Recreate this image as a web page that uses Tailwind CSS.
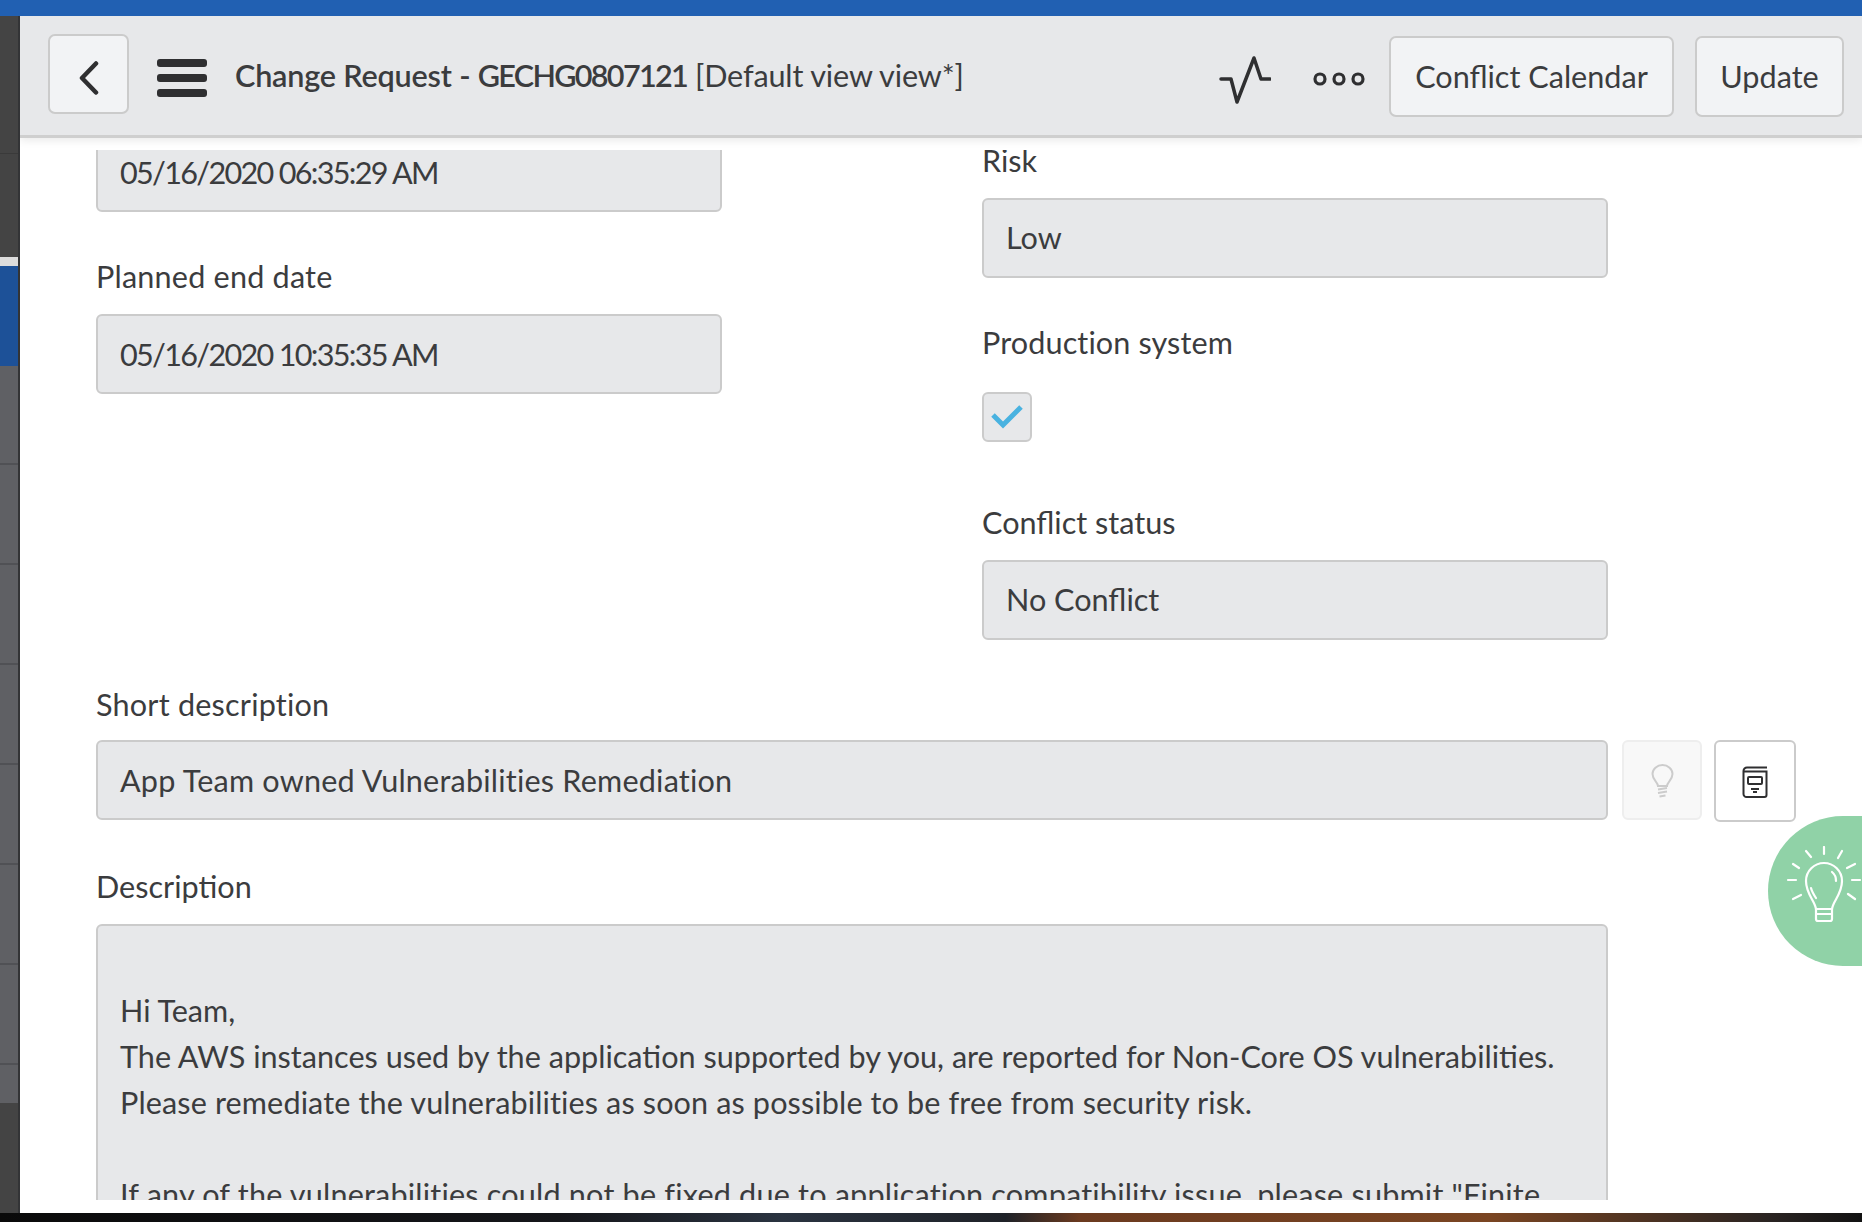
<!DOCTYPE html>
<html lang="en">
<head>
  <meta charset="UTF-8" />
  <title>Change Request - GECHG0807121</title>
  <script src="https://cdn.jsdelivr.net/npm/@tailwindcss/browser@4"></script>
</head>
<body class="h-[1222px] w-[1862px] overflow-hidden flex flex-col bg-black text-[#3b3c3e] font-['Lato',sans-serif] text-[30.6px]">

<!-- Top bar -->
<div class="h-[16px] bg-[#2160b2] shrink-0"></div>

<div class="h-[1197px] flex shrink-0">
  <!-- Sidebar -->
  <aside class="w-[20px] shrink-0 flex flex-col bg-[#444444] border-r-2 border-[#333436]">
    <div class="h-[138px] border-b border-[#3a3a3a]"></div>
    <div class="h-[103px]"></div>
    <div class="h-[9px] bg-[#dcdcdc]"></div>
    <div class="h-[100px] bg-[#1d5198]"></div>
    <div class="h-[99px] bg-[#5f6064] border-b-2 border-[#505155]"></div>
    <div class="h-[100px] bg-[#5f6064] border-b-2 border-[#505155]"></div>
    <div class="h-[100px] bg-[#5f6064] border-b-2 border-[#505155]"></div>
    <div class="h-[100px] bg-[#5f6064] border-b-2 border-[#505155]"></div>
    <div class="h-[100px] bg-[#5f6064] border-b-2 border-[#505155]"></div>
    <div class="h-[100px] bg-[#5f6064] border-b-2 border-[#505155]"></div>
    <div class="h-[100px] bg-[#5f6064] border-b-2 border-[#505155]"></div>
    <div class="h-[38px] bg-[#5f6064]"></div>
  </aside>

  <!-- Main -->
  <main class="relative flex-1 flex flex-col bg-white overflow-hidden">
    <header class="h-[122px] shrink-0 flex items-center bg-[#e7e8ea] border-b-[3px] border-[#cfcfcf] shadow-[0_3px_8px_rgba(0,0,0,0.08)] pl-[28px] pr-[18px] z-10">
      <button class="-mt-[4px] w-[81px] h-[80px] flex items-center justify-center bg-[#f2f3f5] border-2 border-[#cbcbcb] rounded-[7px]">
        <svg class="mt-[9px]" width="22" height="34" viewBox="0 0 22 34" fill="none" stroke="#2f2f31" stroke-width="4.5" stroke-linecap="round" stroke-linejoin="round"><path d="M18 2.5 4 17l14 14.500"/></svg>
      </button>
      <div class="ml-[28px] mt-[5px] w-[50px] flex flex-col gap-[6.500px]">
        <span class="h-[8.500px] bg-[#2f2f31] rounded-[3px]"></span>
        <span class="h-[8.500px] bg-[#2f2f31] rounded-[3px]"></span>
        <span class="h-[8.500px] bg-[#2f2f31] rounded-[3px]"></span>
      </div>
      <h1 class="ml-[28px] whitespace-nowrap"><span class="font-semibold tracking-[-0.2px]">Change Request - </span><span class="font-semibold tracking-[-1.7px]">GECHG0807121</span> <span class="tracking-[-0.15px]">[Default view view*]</span></h1>

      <svg class="ml-auto mt-[8px]" width="52" height="50" viewBox="0 0 52 50" fill="none" stroke="#2f2f31" stroke-width="3.500" stroke-linejoin="round" stroke-linecap="round"><path d="M2 24h10l6 23 17-44 7 21h9"/></svg>
      <svg class="ml-[42px] mr-[24px] mt-[6px]" width="52" height="18" viewBox="0 0 52 18" fill="none" stroke="#2f2f31" stroke-width="3.200"><circle cx="7" cy="9" r="5"/><circle cx="26" cy="9" r="5"/><circle cx="45" cy="9" r="5"/></svg>
      <button class="mt-[2px] w-[285px] h-[81px] bg-[#f2f3f5] border-2 border-[#cbcbcb] rounded-[7px]">Conflict Calendar</button>
      <button class="ml-[21px] mt-[2px] w-[149px] h-[81px] bg-[#f2f3f5] border-2 border-[#cbcbcb] rounded-[7px]">Update</button>
    </header>

    <!-- Scrolling form -->
    <div class="mt-[12px] mb-[13px] flex-1 overflow-hidden">
      <div class="-mt-[9px] pl-[76px]">
        <div class="grid grid-cols-[626px_626px] gap-x-[260px]">
          <div>
            <div class="-mt-[9px] h-[80px] flex items-center px-[22px] pt-[2px] tracking-[-1.7px] bg-[#e7e8ea] border-2 border-[#cbcbcb] rounded-[6px]">05/16/2020 06:35:29 AM</div>
            <label class="block mt-[45px] h-[40px] leading-[39px] tracking-[0.2px]">Planned end date</label>
            <div class="mt-[17px] h-[80px] flex items-center px-[22px] pt-[2px] tracking-[-1.7px] bg-[#e7e8ea] border-2 border-[#cbcbcb] rounded-[6px]">05/16/2020 10:35:35 AM</div>
          </div>
          <div>
            <label class="block h-[40px] leading-[39px]">Risk</label>
            <div class="mt-[17px] h-[80px] flex items-center px-[22px] bg-[#e7e8ea] border-2 border-[#cbcbcb] rounded-[6px]">Low</div>
            <label class="block mt-[45px] h-[40px] leading-[39px] tracking-[0.1px]">Production system</label>
            <div class="mt-[29px] w-[50px] h-[50px] flex items-center justify-center bg-[#e7e8ea] border-2 border-[#cbcbcb] rounded-[6px]">
              <svg width="34" height="26" viewBox="0 0 34 26" fill="none" stroke="#49b2e0" stroke-width="5"><path d="M3 11l10 10L31 3"/></svg>
            </div>
            <label class="block mt-[61px] h-[40px] leading-[39px]">Conflict status</label>
            <div class="mt-[17px] h-[80px] flex items-center px-[22px] bg-[#e7e8ea] border-2 border-[#cbcbcb] rounded-[6px]">No Conflict</div>
          </div>
        </div>

        <label class="block mt-[45px] h-[40px] leading-[39px] tracking-[0.2px]">Short description</label>
        <div class="mt-[15px] flex items-start">
          <div class="w-[1512px] shrink-0 h-[80px] flex items-center px-[22px] pt-[2px] tracking-[0.2px] bg-[#e7e8ea] border-2 border-[#cbcbcb] rounded-[6px]">App Team owned Vulnerabilities Remediation</div>
          <button class="ml-[14px] w-[80px] h-[80px] shrink-0 flex items-center justify-center bg-[#f8f8f8] border-2 border-[#eeeeee] rounded-[6px]">
            <svg class="mt-[2px]" width="23" height="34" viewBox="0 0 23 34" fill="none" stroke="#cccccc" stroke-width="2"><path d="M7 22c0-4-5.500-6-5.500-12a10 9 0 0 1 20 0c0 6-5.500 8-5.500 12z"/><path d="M7 25.500l9-1.500M7 29l9-1.500M8.500 32.500l6-1"/></svg>
          </button>
          <button class="ml-[12px] w-[82px] h-[82px] shrink-0 flex items-center justify-center bg-white border-2 border-[#cbcbcb] rounded-[6px]">
            <svg class="mt-[2px]" width="26" height="32" viewBox="0 0 26 32" fill="none" stroke="#2f2f31" stroke-width="2"><path d="M25 1.500H5a3.500 3.500 0 0 0-3.500 3.500v23a3 3 0 0 0 3 3h18a2 2 0 0 0 2-2V5.500H2"/><rect x="6" y="11" width="14" height="7" rx="1"/><path d="M9 23h8M11 26h4"/></svg>
          </button>
        </div>

        <label class="block mt-[45px] h-[40px] leading-[39px]">Description</label>
        <div class="mt-[17px] w-[1512px] h-[330px] px-[22px] pt-[62px] bg-[#e7e8ea] border-2 border-[#cbcbcb] rounded-[6px] leading-[46px]">
          <p>Hi Team,</p>
          <p>The AWS instances used by the application supported by you, are reported for Non-Core OS vulnerabilities.</p>
          <p class="tracking-[0.12px]">Please remediate the vulnerabilities as soon as possible to be free from security risk.</p>
          <p>&nbsp;</p>
          <p class="whitespace-nowrap tracking-[0.19px]">If any of the vulnerabilities could not be fixed due to application compatibility issue, please submit "Finite</p>
        </div>
      </div>
    </div>

    <!-- Floating tip -->
    <div class="absolute left-[1748px] top-[800px] w-[94px] h-[150px] pt-[30px] pl-[18px] bg-[#90d2a7] rounded-l-[75px]">
      <svg width="76" height="78" viewBox="0 0 76 78" fill="none" stroke="#ffffff" stroke-width="2.200" stroke-linecap="round">
        <path d="M30 63c-1-8-10-15-10-28a18 18 0 0 1 36 0c0 13-9 20-10 28z"/>
        <path d="M30 63v10a2 2 0 0 0 2 2h12a2 2 0 0 0 2-2V63M31 68h14"/>
        <path d="M46 26a11 11 0 0 1 4 9M25 42c1 4 3 7 5 10"/>
        <path d="M38 1v7M20 5l5 6M56 5l-4 7M7 18l6 4M69 18l-8 4M2 34h8M66 34h8M7 53l8-4M69 53l-7-5"/>
      </svg>
    </div>
  </main>
</div>

<!-- Desktop wallpaper strip -->
<div class="flex-1 bg-[linear-gradient(90deg,#0a0a0a_0%,#15161a_30%,#2a3340_42%,#1f2228_54%,#6b3a1f_58%,#7a4522_80%,#2a2422_95%,#121212_100%)]"></div>

</body>
</html>
